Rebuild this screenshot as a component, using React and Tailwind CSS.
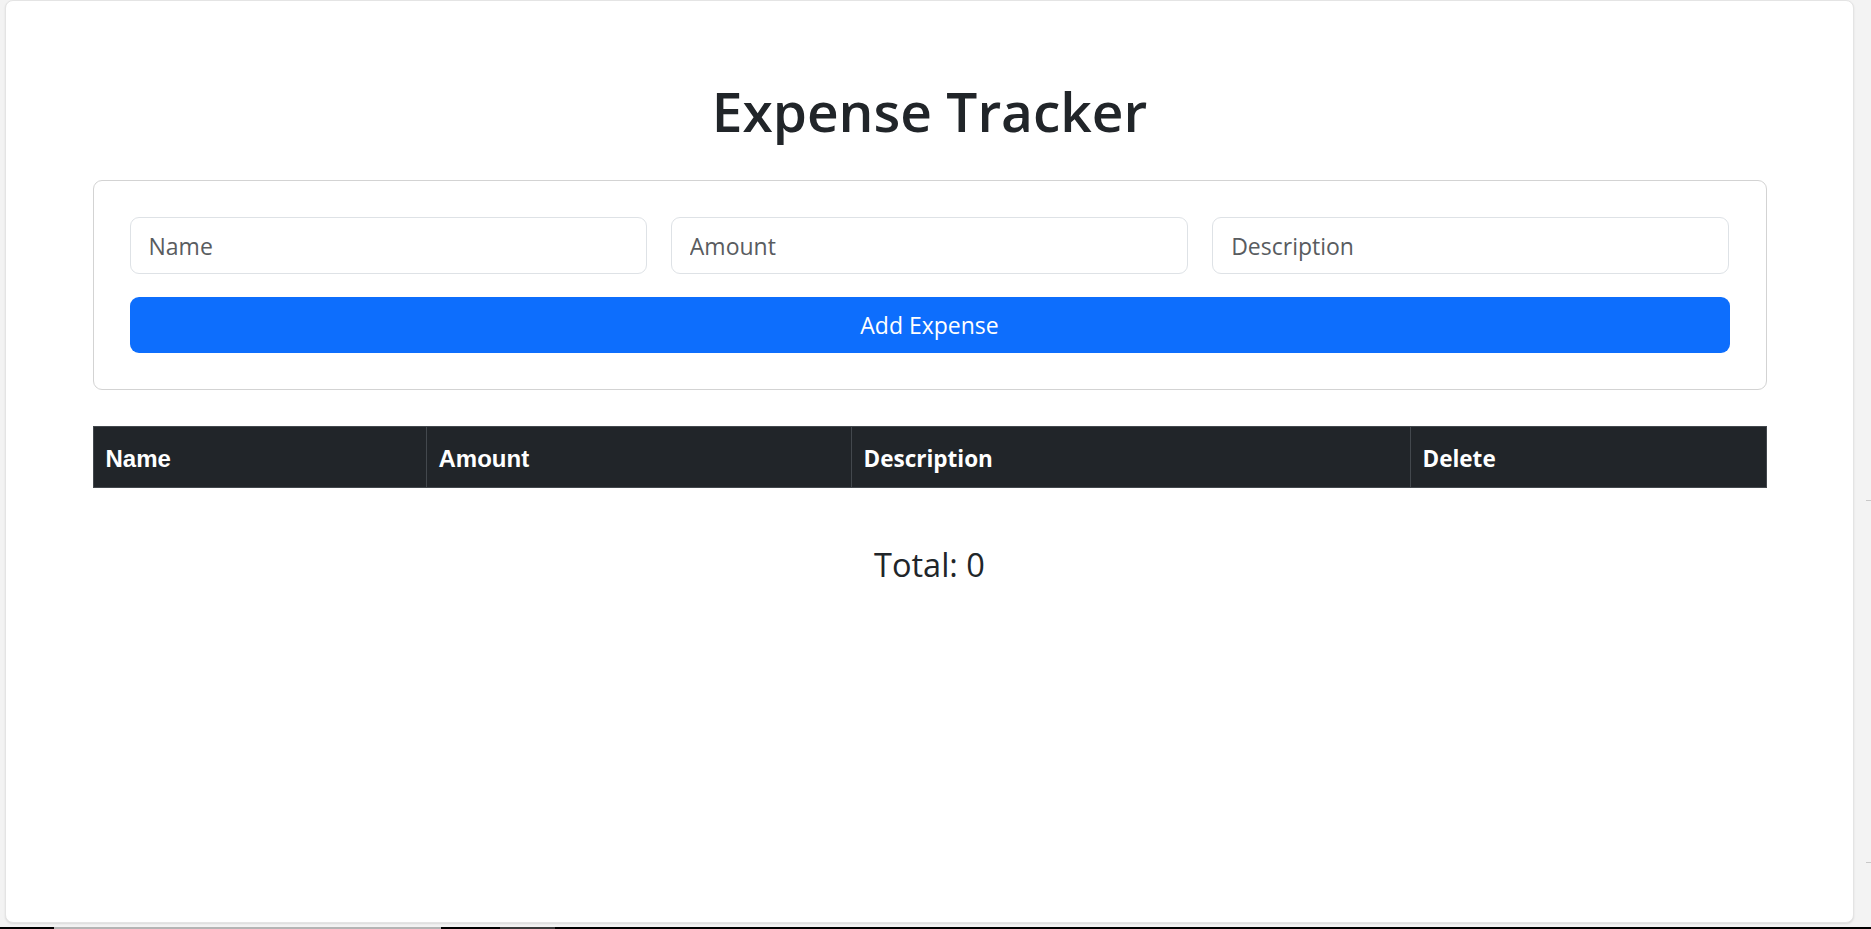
import React from "react";

export default function App() {
  return (
    <div className="relative flex h-[929px] w-[1871px] flex-col overflow-hidden bg-[#f3f3f3] font-['Open_Sans','Noto_Sans',sans-serif]">
      <div className="ml-[5px] h-[923px] w-[1849px] rounded-[8px] border border-[#e4e4e4] bg-white shadow-[0_1px_2px_rgba(0,0,0,0.10)]">
        <div className="mx-auto w-[1674px] pt-[74px]">
          <h1 className="mb-[33px] text-center text-[55px] font-semibold leading-[72px] text-[#212529]">
            Expense Tracker
          </h1>

          <div className="rounded-[9px] border border-[#d3d3d3] p-[36px]">
            <div className="grid grid-cols-3 gap-[24px]">
              {["Name", "Amount", "Description"].map((p) => (
                <input
                  key={p}
                  placeholder={p}
                  className="h-[57px] rounded-[9px] border border-[#dee2e6] px-[18px] text-[23px] text-[#212529] outline-none placeholder:text-[#595c5f]"
                />
              ))}
            </div>
            <button className="mt-[23px] h-[56px] w-full rounded-[9px] bg-[#0d6efd] text-[23px] text-white">
              Add Expense
            </button>
          </div>

          <div className="mt-[36px] flex h-[62px] w-full border border-[#43484d] bg-[#212529] text-[22.5px] font-bold text-white">
            <div className="flex w-[333px] items-center border-r border-[#43484d] px-[12px] pt-[3px] font-['Liberation_Sans',Arial,sans-serif] text-[24px]">
              Name
            </div>
            <div className="flex w-[425px] items-center border-r border-[#43484d] px-[12px] pt-[3px] font-['Liberation_Sans',Arial,sans-serif] text-[24px]">
              Amount
            </div>
            <div className="flex w-[559px] items-center border-r border-[#43484d] px-[12px] pt-[3px]">
              Description
            </div>
            <div className="flex flex-1 items-center px-[12px] pt-[3px]">Delete</div>
          </div>

          <div className="mt-[55px] text-center text-[32.5px] font-normal leading-[43px] text-[#212529]">
            Total: 0
          </div>
        </div>
      </div>

      <div className="mt-auto flex h-[2px] w-full bg-black">
        <div className="w-[54px] bg-black" />
        <div className="w-[387px] bg-[#b4b4b4]" />
        <div className="w-[59px] bg-black" />
        <div className="w-[55px] bg-[#3a3a3a]" />
        <div className="flex-1 bg-black" />
      </div>

      <div className="absolute right-0 top-[500px] h-px w-[5px] bg-[#c8c8c8]" />
      <div className="absolute right-0 top-[862px] h-px w-[5px] bg-[#c8c8c8]" />
    </div>
  );
}
